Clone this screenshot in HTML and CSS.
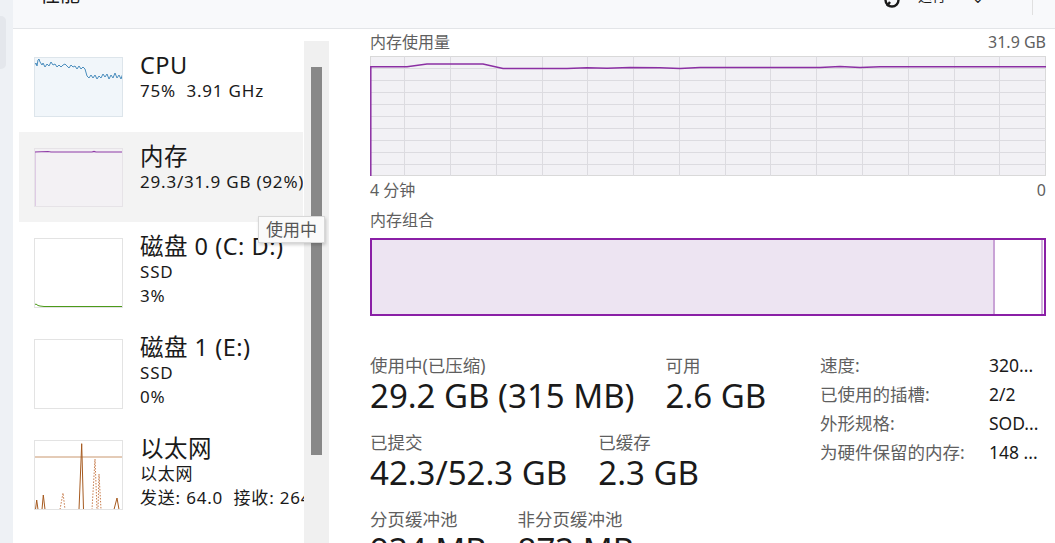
FILE: index.html
```html
<!DOCTYPE html>
<html lang="zh-CN">
<head>
  <meta charset="UTF-8">
  <title>任务管理器 - 性能</title>
  <link rel="stylesheet" href="styles.css">
</head>
<body>

<div class="app">
  <!-- navigation rail (mostly cut off) -->
  <div class="rail"><div class="rail-pill"></div></div>

  <div class="window">
    <header class="topbar">
      <span class="page-title">性能</span>
      <div class="top-actions">
        <svg class="action-icon" width="16" height="16" viewBox="0 0 16 16">
          <circle cx="8" cy="8" r="6.5" fill="none" stroke="#1a1a1a" stroke-width="2.4"/>
          <path d="M3 14 L6 10" stroke="#1a1a1a" stroke-width="2.4"/>
        </svg>
        <span class="action-text">运行</span>
        <span class="action-more">⌄</span>
        <span class="action-sep"></span>
      </div>
    </header>

    <div class="content">
      <!-- device list -->
      <aside class="sidebar">
        <ul class="device-list">
          <li class="device">
            <svg class="thumb-graph cpu" width="89" height="60" viewBox="0 0 89 60">
              <polyline fill="none" stroke="#4a8dbd" stroke-width="1"
                points="0.5,60 0.5,8 2,6 3,9 4,3 5,2 6,5 8,8 9,6 11,10 13,7 15,9 17,5 19,8 21,7 23,10 25,8 27,10 29,8 31,7 33,9 35,11 37,8 39,10 41,9 43,12 45,9 47,12 49,10 51,12 53,19 55,21 57,18 59,21 61,18 63,22 65,19 67,21 69,17 71,20 73,17 75,22 77,18 79,21 81,16 83,21 85,18 87,22 89,16"/>
            </svg>
            <div class="device-text">
              <div class="device-name">CPU</div>
              <div class="device-sub">75%&nbsp; 3.91 GHz</div>
            </div>
          </li>
          <li class="device selected">
            <svg class="thumb-graph mem" width="89" height="59" viewBox="0 0 89 59">
              <polyline fill="none" stroke="#8e3aa6" stroke-width="1.2"
                points="0.6,59 0.6,4 14,3.5 17,4 58,4 60,3.4 62,4 89,4"/>
            </svg>
            <div class="device-text">
              <div class="device-name">内存</div>
              <div class="device-sub">29.3/31.9 GB (92%)</div>
            </div>
          </li>
          <li class="device">
            <svg class="thumb-graph tall" width="89" height="70" viewBox="0 0 89 70">
              <polyline fill="none" stroke="#4c9a1a" stroke-width="1"
                points="0,67 2,66 4,67.5 6,68 10,68.5 89,68.5"/>
            </svg>
            <div class="device-text">
              <div class="device-name">磁盘 0 (C: D:)</div>
              <div class="device-sub">SSD</div>
              <div class="device-sub">3%</div>
            </div>
          </li>
          <li class="device">
            <svg class="thumb-graph tall" width="89" height="70" viewBox="0 0 89 70"></svg>
            <div class="device-text">
              <div class="device-name">磁盘 1 (E:)</div>
              <div class="device-sub">SSD</div>
              <div class="device-sub">0%</div>
            </div>
          </li>
          <li class="device">
            <svg class="thumb-graph tall" width="89" height="70" viewBox="0 0 89 70">
              <line x1="0" y1="17" x2="89" y2="17" stroke="#c9976f" stroke-width="1"/>
              <polyline fill="none" stroke="#a65a1f" stroke-width="1"
                points="0,69.5 1.5,69.5 2.7,60 4,69.5 8,69.5 9.3,55 11,69.5 45,69.5 47.7,3.7 49.5,69.5 80,69.5 83,58 85,69.5 89,69.5"/>
              <polyline fill="none" stroke="#c77b4a" stroke-width="1" stroke-dasharray="1.5 1.5"
                points="26,69.5 29,53 31,69.5 58,69.5 61,19 63,69.5 64,69.5 65,34 67,69.5"/>
            </svg>
            <div class="device-text">
              <div class="device-name">以太网</div>
              <div class="device-sub">以太网</div>
              <div class="device-sub">发送: 64.0&nbsp; 接收: 264 Kbps</div>
            </div>
          </li>
        </ul>
        <div class="scrollbar"><div class="scroll-thumb"></div></div>
      </aside>

      <!-- memory details -->
      <main class="detail">
        <div class="graph-head">
          <span>内存使用量</span>
          <span>31.9 GB</span>
        </div>
        <svg class="usage-graph" width="676" height="120" viewBox="0 0 676 120">
          <rect x="0.5" y="0.5" width="675" height="119" fill="#f2f1f5" stroke="#d9d9d9"/>
          <g stroke="#dcdbe0" stroke-width="1">
            <line x1="0" y1="12.5" x2="676" y2="12.5"/>
            <line x1="0" y1="24.5" x2="676" y2="24.5"/>
            <line x1="0" y1="36.5" x2="676" y2="36.5"/>
            <line x1="0" y1="48.5" x2="676" y2="48.5"/>
            <line x1="0" y1="60.5" x2="676" y2="60.5"/>
            <line x1="0" y1="72.5" x2="676" y2="72.5"/>
            <line x1="0" y1="84.5" x2="676" y2="84.5"/>
            <line x1="0" y1="96.5" x2="676" y2="96.5"/>
            <line x1="0" y1="108.5" x2="676" y2="108.5"/>
            <line x1="34.5" y1="0" x2="34.5" y2="120"/>
            <line x1="80.5" y1="0" x2="80.5" y2="120"/>
            <line x1="126.5" y1="0" x2="126.5" y2="120"/>
            <line x1="172.5" y1="0" x2="172.5" y2="120"/>
            <line x1="217.5" y1="0" x2="217.5" y2="120"/>
            <line x1="263.5" y1="0" x2="263.5" y2="120"/>
            <line x1="309.5" y1="0" x2="309.5" y2="120"/>
            <line x1="355.5" y1="0" x2="355.5" y2="120"/>
            <line x1="400.5" y1="0" x2="400.5" y2="120"/>
            <line x1="446.5" y1="0" x2="446.5" y2="120"/>
            <line x1="492.5" y1="0" x2="492.5" y2="120"/>
            <line x1="538.5" y1="0" x2="538.5" y2="120"/>
            <line x1="584.5" y1="0" x2="584.5" y2="120"/>
            <line x1="629.5" y1="0" x2="629.5" y2="120"/>
          </g>
          <polyline fill="none" stroke="#8b2fa3" stroke-width="1.5"
            points="0.8,120 0.8,10.7 37,10.7 57,8 113,8 133,12.5 197,12.5 217,11.7 237,12.3 260,11.5 290,11.7 310,12.5 330,11.5 450,11.5 470,10.5 490,11.5 510,10.8 676,10.7"/>
        </svg>
        <div class="graph-axis">
          <span>4 分钟</span>
          <span>0</span>
        </div>

        <div class="section-label">内存组合</div>
        <div class="composition">
          <div class="comp-used"></div>
          <div class="comp-free"></div>
        </div>

        <div class="stats">
          <div class="stats-main">
            <div class="stat-row">
              <div class="stat">
                <div class="stat-label">使用中(已压缩)</div>
                <div class="stat-value">29.2 GB (315 MB)</div>
              </div>
              <div class="stat">
                <div class="stat-label">可用</div>
                <div class="stat-value">2.6 GB</div>
              </div>
            </div>
            <div class="stat-row">
              <div class="stat">
                <div class="stat-label">已提交</div>
                <div class="stat-value">42.3/52.3 GB</div>
              </div>
              <div class="stat">
                <div class="stat-label">已缓存</div>
                <div class="stat-value">2.3 GB</div>
              </div>
            </div>
            <div class="stat-row">
              <div class="stat">
                <div class="stat-label">分页缓冲池</div>
                <div class="stat-value">934 MB</div>
              </div>
              <div class="stat">
                <div class="stat-label">非分页缓冲池</div>
                <div class="stat-value">873 MB</div>
              </div>
            </div>
          </div>

          <dl class="specs">
            <dt>速度:</dt><dd>320...</dd>
            <dt>已使用的插槽:</dt><dd>2/2</dd>
            <dt>外形规格:</dt><dd>SOD...</dd>
            <dt>为硬件保留的内存:</dt><dd>148 ...</dd>
          </dl>
        </div>
      </main>
    </div>
  </div>

  <div class="tooltip">使用中</div>
</div>

</body>
</html>
```

FILE: styles.css
```css
/* Base */
html, body {
  margin: 0;
  height: 100%;
}
body {
  font-family: "Noto Sans", "Noto Sans CJK SC", sans-serif;
  color: #1a1a1a;
  background: #ffffff;
  overflow: hidden;
}
.app {
  position: relative;
  display: flex;
  height: 543px;
}

/* Navigation rail */
.rail {
  width: 13px;
  flex: none;
  background: #eef1f5;
  padding-top: 16px;
}
.rail-pill {
  width: 6px;
  height: 53px;
  background: #e4e7ec;
  border-radius: 0 5px 5px 0;
}

.window {
  flex: 1;
  display: flex;
  flex-direction: column;
  min-width: 0;
}

/* Top bar */
.topbar {
  height: 28px;
  flex: none;
  background: #f8f9fb;
  border-bottom: 1px solid #e3e5e8;
  display: flex;
  justify-content: space-between;
  overflow: hidden;
}
.page-title {
  margin: -15px 0 0 27px;
  font-size: 20px;
  line-height: 20px;
}
.top-actions {
  display: flex;
  align-items: flex-start;
  margin-top: -8px;
}
.action-icon {
  margin-right: 18px;
}
.action-text {
  font-size: 14px;
  line-height: 16px;
  margin-top: -4px;
}
.action-more {
  font-size: 14px;
  line-height: 16px;
  margin: -2px 0 0 26px;
}
.action-sep {
  width: 1px;
  height: 23px;
  background: #e0e0e0;
  margin: 0 22px 0 48px;
}

.content {
  flex: 1;
  display: flex;
  min-height: 0;
}

/* Sidebar */
.sidebar {
  width: 317px;
  flex: none;
  display: flex;
  background: #ffffff;
}
.device-list {
  flex: 1;
  list-style: none;
  margin: 0;
  padding: 12px 0 0 6px;
  min-width: 0;
}
.device {
  display: flex;
  padding: 16px 0 15px 15px;
  overflow: hidden;
  white-space: nowrap;
}
.device.selected {
  background: #f3f3f3;
  margin-right: 1px;
}
.thumb-graph {
  flex: none;
  display: block;
  background: #ffffff;
  outline: 1px solid #e3e3e3;
  outline-offset: -1px;
}
.thumb-graph.cpu {
  background: #f1f6fa;
  outline-color: #dde5eb;
}
.thumb-graph.mem {
  background: #f3f1f4;
  outline-color: #e6e3e7;
}
.device-text {
  margin: -5px 0 0 17px;
}
.device-name {
  font-size: 23.5px;
  line-height: 27px;
  letter-spacing: 0.5px;
}
.device-sub {
  font-size: 17px;
  line-height: 24px;
  letter-spacing: 0.8px;
}

.scrollbar {
  width: 25px;
  flex: none;
  margin: 12px 1px 0 0;
  background: #f0f0f0;
  padding-top: 26px;
}
.scroll-thumb {
  width: 11px;
  height: 388px;
  margin-left: 7px;
  background: #888888;
}

/* Detail pane */
.detail {
  flex: 1;
  padding: 3px 9px 0 40px;
  min-width: 0;
}
.graph-head,
.graph-axis {
  display: flex;
  justify-content: space-between;
  color: #5f5f5f;
}
.graph-head {
  font-size: 16px;
  line-height: 20px;
  margin-bottom: 4px;
}
.usage-graph {
  display: block;
}
.graph-axis {
  font-size: 16px;
  line-height: 20px;
  margin-top: 4px;
}
.section-label {
  font-size: 16px;
  line-height: 20px;
  color: #5f5f5f;
  margin-top: 10px;
}
.composition {
  margin-top: 8px;
  height: 74px;
  border: 2px solid #8a1fa6;
  display: flex;
}
.comp-used {
  width: 621px;
  background: #ede4f2;
  border-right: 2px solid #c9a3d6;
}
.comp-free {
  flex: 1;
  background: #ffffff;
  border-right: 2px solid #d3b6dd;
  margin-right: 1px;
}

/* Stats */
.stats {
  display: flex;
  align-items: flex-start;
  margin-top: 38px;
}
.stats-main {
  width: 450px;
  flex: none;
}
.stat-row {
  display: flex;
  gap: 31px;
  margin-bottom: 15px;
}
.stat-label {
  font-size: 17.5px;
  line-height: 22px;
  color: #5f5f5f;
}
.stat-value {
  font-size: 33px;
  line-height: 40px;
  white-space: nowrap;
}
.specs {
  margin: -3px 0 0 0;
  display: grid;
  grid-template-columns: 169px auto;
  align-content: start;
  font-size: 17.5px;
  line-height: 29px;
}
.specs dt {
  color: #5f5f5f;
}
.specs dd {
  margin: 0;
  color: #1a1a1a;
}

/* Tooltip */
.tooltip {
  position: absolute;
  left: 258px;
  top: 216px;
  padding: 2px 7px;
  font-size: 17px;
  line-height: 21px;
  color: #555555;
  background: #fafafa;
  border: 1px solid #d8d8d8;
  box-shadow: 1px 2px 3px rgba(0, 0, 0, 0.18);
}
```
